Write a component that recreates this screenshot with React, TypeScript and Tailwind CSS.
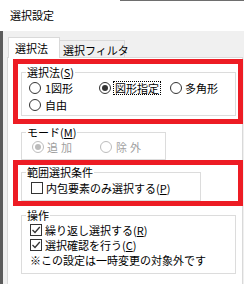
import React from "react";

function Radio({ checked = false, disabled = false }: { checked?: boolean; disabled?: boolean }) {
  return (
    <span
      className={
        disabled
          ? "w-[12px] h-[12px] rounded-full border border-[#bcbcbc] bg-white flex items-center justify-center shrink-0"
          : "w-[12px] h-[12px] rounded-full border border-[#333333] bg-white flex items-center justify-center shrink-0"
      }
    >
      {checked && (
        <span
          className={
            disabled
              ? "w-[6px] h-[6px] rounded-full bg-[#bcbcbc]"
              : "w-[6px] h-[6px] rounded-full bg-[#333333]"
          }
        />
      )}
    </span>
  );
}

function Check({ checked = false }: { checked?: boolean }) {
  return (
    <span className="w-[12px] h-[12px] border border-[#333333] bg-white flex items-center justify-center shrink-0">
      {checked && (
        <svg width="10" height="10" viewBox="0 0 10 10">
          <path d="M1.5 5 L4 7.5 L8.8 2" fill="none" stroke="#333333" strokeWidth="1.3" />
        </svg>
      )}
    </span>
  );
}

export default function App() {
  return (
    <div className="w-[244px] h-[284px] overflow-hidden bg-[#f0f0f0] flex flex-col font-['Noto_Sans_CJK_JP',sans-serif] text-[11px] leading-[14px] text-black relative">
      {/* title bar */}
      <div className="h-[31px] bg-white shrink-0 flex flex-col">
        <div className="h-px ml-[120px] bg-[#6e6e6e]" />
        <div className="pl-[10px] pt-[7px] text-[11px] leading-[14px]">選択設定</div>
      </div>

      <div className="flex flex-1 min-h-0">
        <div className="w-[3px] bg-[#5c5c5c]" />
        <div className="w-[4px]" />
        <div className="flex-1 flex flex-col mr-[1px]">
          {/* tabs */}
          <div className="h-[26px] shrink-0 flex items-end">
            <div className="relative z-10 ml-[1px] w-[52px] h-[21px] -mb-px bg-white border-t border-l border-r border-[#d9d9d9] pl-[6px] pt-[3px]">
              選択法
            </div>
            <div className="w-[65px] h-[17px] border-t border-r border-[#d9d9d9] pl-[3px] pt-[2px] whitespace-nowrap">
              選択フィルタ
            </div>
          </div>

          {/* panel */}
          <div className="flex-1 bg-white border border-b-0 border-[#d9d9d9] flex flex-col">
            {/* 選択法 */}
            <fieldset className="ml-[13px] mt-[7px] w-[215px] h-[51px] border border-[#dcdcdc]">
              <legend className="ml-[4px] px-[1px] leading-[14px]">
                選択法(<span className="underline">S</span>)
              </legend>
              <div className="flex flex-col pl-[7px]">
                <div className="h-[17px] flex items-center">
                  <div className="w-[70px] flex items-center gap-[4px]">
                    <Radio />
                    <span>1図形</span>
                  </div>
                  <div className="w-[71px] flex items-center gap-[2px]">
                    <Radio checked />
                    <span className="border border-dotted border-black px-[1px] leading-[12px]">図形指定</span>
                  </div>
                  <div className="flex items-center gap-[3px]">
                    <Radio />
                    <span>多角形</span>
                  </div>
                </div>
                <div className="h-[17px] flex items-center gap-[4px]">
                  <Radio />
                  <span>自由</span>
                </div>
              </div>
            </fieldset>

            {/* モード */}
            <fieldset className="ml-[13px] mt-[9px] w-[145px] h-[35px] border border-[#dcdcdc]">
              <legend className="ml-[4px] px-[1px] leading-[14px]">
                モード(<span className="underline">M</span>)
              </legend>
              <div className="h-[16px] flex items-center pl-[10px] text-[#a0a0a0]">
                <div className="w-[68px] flex items-center gap-[3px]">
                  <Radio checked disabled />
                  <span className="flex gap-[3px]">
                    <span>追</span>
                    <span>加</span>
                  </span>
                </div>
                <div className="flex items-center gap-[4px]">
                  <Radio disabled />
                  <span className="flex gap-[3px]">
                    <span>除</span>
                    <span>外</span>
                  </span>
                </div>
              </div>
            </fieldset>

            {/* 範囲選択条件 */}
            <fieldset className="ml-[13px] mt-[5px] w-[180px] h-[36px] border border-[#dcdcdc]">
              <legend className="ml-[4px] px-[1px] leading-[14px]">範囲選択条件</legend>
              <div className="h-[18px] flex items-center gap-[3px] pl-[9px]">
                <Check />
                <span>
                  内包要素のみ選択する(<span className="underline">P</span>)
                </span>
              </div>
            </fieldset>

            {/* 操作 */}
            <fieldset className="ml-[13px] mt-[7px] w-[215px] h-[66px] border border-[#dcdcdc]">
              <legend className="ml-[4px] px-[1px] leading-[14px]">操作</legend>
              <div className="flex flex-col pl-[8px]">
                <div className="h-[15px] flex items-center gap-[3px]">
                  <Check checked />
                  <span>
                    繰り返し選択する(<span className="underline">R</span>)
                  </span>
                </div>
                <div className="h-[16px] flex items-center gap-[3px]">
                  <Check checked />
                  <span>
                    選択確認を行う(<span className="underline">C</span>)
                  </span>
                </div>
                <div className="h-[14px] flex items-center whitespace-nowrap">※この設定は一時変更の対象外です</div>
              </div>
            </fieldset>
          </div>
        </div>
      </div>

      {/* red annotation boxes */}
      <div className="absolute left-[13px] top-[59px] w-[230px] h-[65px] border-[5px] border-[#ed1c24]" />
      <div className="absolute left-[13px] top-[160px] w-[230px] h-[46px] border-[5px] border-[#ed1c24]" />
    </div>
  );
}
